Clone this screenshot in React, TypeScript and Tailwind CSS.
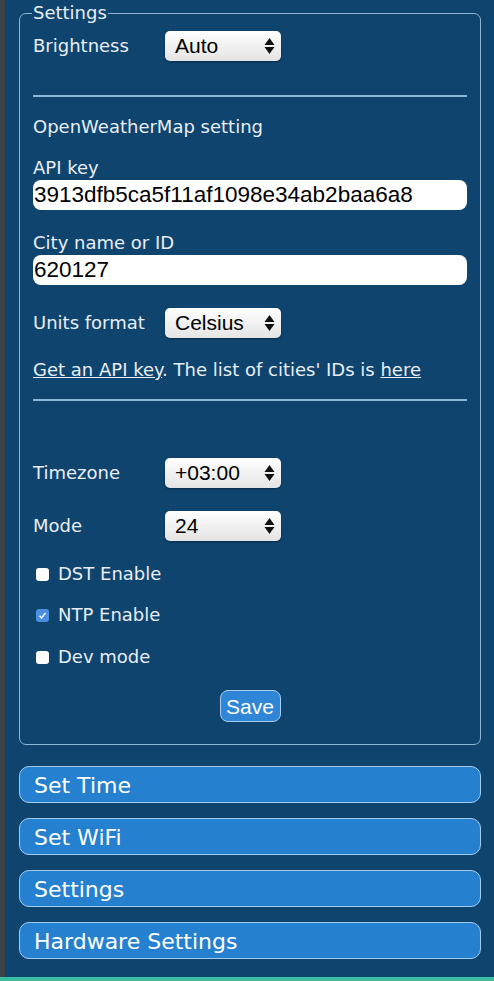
import React, { useState } from 'react';

const labelFont = { fontFamily: '"DejaVu Sans", Verdana, sans-serif' };
const fieldFont = { fontFamily: '"Liberation Sans", Arial, sans-serif' };

// Mac-style select box with the up/down arrows on the right
const FakeSelect = ({ value }: { value: string }) => (
  <div
    style={fieldFont}
    className="w-[116px] h-[30px] rounded-[5px] bg-gradient-to-b from-white to-[#e4e4e4] shadow-[0_1px_2px_rgba(0,0,0,0.35)] flex items-center justify-between pl-[10px] pr-[6px] text-[21px] text-black"
  >
    <span>{value}</span>
    <svg width="11" height="18" viewBox="0 0 11 18" className="text-[#111]">
      <path d="M5.5 1 L10.5 8 L0.5 8 Z" fill="currentColor" />
      <path d="M5.5 17 L10.5 10 L0.5 10 Z" fill="currentColor" />
    </svg>
  </div>
);

const Row = ({ label, value, className = '' }: { label: string; value: string; className?: string }) => (
  <div className={`flex items-center ${className}`}>
    <span className="w-[132px] text-[18px] leading-[22px]">{label}</span>
    <FakeSelect value={value} />
  </div>
);

const Check = ({ label, checked, onToggle, className = '' }: { label: string; checked: boolean; onToggle: () => void; className?: string }) => (
  <div className={`flex items-center h-[22px] cursor-pointer ${className}`} onClick={onToggle}>
    <span
      className={`ml-[3px] w-[13px] h-[13px] rounded-[3px] flex items-center justify-center ${
        checked ? 'bg-[#4a8fe0]' : 'bg-white'
      }`}
    >
      {checked && (
        <svg width="9" height="9" viewBox="0 0 9 9">
          <path d="M1.5 4.8 L3.6 7 L7.5 1.8" stroke="white" strokeWidth="1.4" fill="none" />
        </svg>
      )}
    </span>
    <span className="ml-[9px] text-[18px] leading-[22px]">{label}</span>
  </div>
);

const NavButton = ({ title, className = '' }: { title: string; className?: string }) => (
  <button
    type="button"
    style={labelFont}
    className={`w-full h-[37px] rounded-[10px] border-[1.5px] border-[#a3cbee] bg-[#2580d0] text-left pl-[14px] pt-[2px] text-[22px] text-white ${className}`}
  >
    {title}
  </button>
);

export default function App() {
  const [dst, setDst] = useState(false);
  const [ntp, setNtp] = useState(true);
  const [dev, setDev] = useState(false);

  return (
    <div className="w-full h-[981px] flex flex-col overflow-hidden">
      <div className="flex flex-1">
        <div className="w-[5px] bg-[#3d4346]" />
        <div className="flex-1 bg-[#0f446e] pl-[14px] pr-[13px] text-[#e8eef4]" style={labelFont}>
          <fieldset className="mt-[2px] border border-[#8fb4d4] rounded-[7px] px-[13px] pb-[22px]">
            <legend className="px-[1px] -ml-[1px] text-[18px] leading-[22px]">Settings</legend>

            <Row label="Brightness" value="Auto" className="mt-[7px]" />

            <div className="mt-[34px] h-[2px] bg-[#8fb4d4]" />

            <div className="mt-[19px] text-[18px] leading-[22px]">OpenWeatherMap setting</div>

            <div className="mt-[19px] text-[18px] leading-[22px]">API key</div>
            <input
              readOnly
              value="3913dfb5ca5f11af1098e34ab2baa6a8"
              style={fieldFont}
              className="mt-[1px] w-full h-[30px] rounded-[8px] bg-white pl-[1px] text-[22.5px] text-black outline-none"
            />

            <div className="mt-[22px] text-[18px] leading-[22px]">City name or ID</div>
            <input
              readOnly
              value="620127"
              style={fieldFont}
              className="mt-[1px] w-full h-[30px] rounded-[8px] bg-white pl-[1px] text-[22.5px] text-black outline-none"
            />

            <Row label="Units format" value="Celsius" className="mt-[23px]" />

            <div className="mt-[21px] text-[18px] leading-[22px]">
              <a className="underline">Get an API key</a>. The list of cities' IDs is{' '}
              <a className="underline">here</a>
            </div>

            <div className="mt-[18px] h-[2px] bg-[#8fb4d4]" />

            <Row label="Timezone" value="+03:00" className="mt-[57px]" />
            <Row label="Mode" value="24" className="mt-[23px]" />

            <Check label="DST Enable" checked={dst} onToggle={() => setDst(!dst)} className="mt-[22px]" />
            <Check label="NTP Enable" checked={ntp} onToggle={() => setNtp(!ntp)} className="mt-[19px]" />
            <Check label="Dev mode" checked={dev} onToggle={() => setDev(!dev)} className="mt-[20px]" />

            <div className="mt-[22px] flex justify-center">
              <button
                type="button"
                style={fieldFont}
                className="w-[61px] h-[32px] rounded-[8px] border-[1.5px] border-[#a6cdee] bg-[#2f86d6] text-[21px] text-white"
              >
                Save
              </button>
            </div>
          </fieldset>

          <div className="mt-[21px] flex flex-col gap-[15px]">
            <NavButton title="Set Time" />
            <NavButton title="Set WiFi" />
            <NavButton title="Settings" />
            <NavButton title="Hardware Settings" />
          </div>
        </div>
      </div>
      <div className="h-[4px] bg-[#3dbd9f]" />
    </div>
  );
}
